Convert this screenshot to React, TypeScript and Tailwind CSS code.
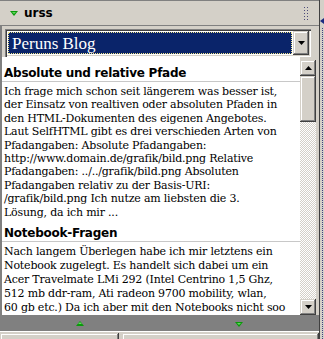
const raised =
  'shadow-[inset_-1px_-1px_#404040,inset_1px_1px_#d4d0c8,inset_-2px_-2px_#808080,inset_2px_2px_#ffffff]';

const firstPost = [
  'Ich frage mich schon seit längerem was besser ist,',
  'der Einsatz von realtiven oder absoluten Pfaden in',
  'den HTML-Dokumenten des eigenen Angebotes.',
  'Laut SelfHTML gibt es drei verschieden Arten von',
  'Pfadangaben: Absolute Pfadangaben:',
  'http://www.domain.de/grafik/bild.png Relative',
  'Pfadangaben: ../../grafik/bild.png Absoluten',
  'Pfadangaben relativ zu der Basis-URI:',
  '/grafik/bild.png Ich nutze am liebsten die 3.',
  'Lösung, da ich mir ...',
];

const secondPost = [
  'Nach langem Überlegen habe ich mir letztens ein',
  'Notebook zugelegt. Es handelt sich dabei um ein',
  'Acer Travelmate LMi 292 (Intel Centrino 1,5 Ghz,',
  '512 mb ddr-ram, Ati radeon 9700 mobility, wlan,',
  '60 gb etc.) Da ich aber mit den Notebooks nicht soo',
];

const Arrow = ({ up, color = '#000000' }: { up?: boolean; color?: string }) => (
  <svg width="7" height="4" viewBox="0 0 7 4">
    <polygon points={up ? '3.5,0 7,4 0,4' : '0,0 7,0 3.5,4'} fill={color} />
  </svg>
);

const GreenArrow = ({ up }: { up?: boolean }) => (
  <svg width="8" height="5" viewBox="0 0 8 5">
    <polygon points={up ? '4,0 8,5 0,5' : '0,0 8,0 4,5'} fill="#0a9a0a" />
    <polygon points={up ? '4,1 6,3 2,3' : '2,1 6,1 4,3'} fill="#5fd85f" />
  </svg>
);

const Post = ({ title, lines, first }: { title: string; lines: string[]; first?: boolean }) => (
  <div className={first ? 'mb-[7px]' : 'mb-[1px]'}>
    <div className="mx-[-2px] px-[2px] border-b border-[#c8c8c8] text-[12px] leading-[15px] font-bold tracking-[-0.25px] text-black font-['DejaVu_Sans',sans-serif] whitespace-nowrap">
      {title}
    </div>
    <div
      className={`pt-[3px] text-[11px] tracking-[-0.2px] text-black font-['DejaVu_Serif',serif] whitespace-nowrap ${
        first ? 'leading-[13.4px]' : 'leading-[14px]'
      }`}
    >
      {lines.map((l) => (
        <div key={l}>{l}</div>
      ))}
    </div>
  </div>
);

export default function App() {
  return (
    <div className="w-[324px] h-[339px] bg-[#d4d0c8] flex overflow-hidden font-['DejaVu_Sans',sans-serif]">
      <div className="w-[319px] flex flex-col">
        {/* panel header */}
        <div className="h-[26px] border-t border-b border-[#808080] flex items-center pl-[10px] pr-[11px]">
          <GreenArrow />
          <span className="ml-[6px] text-[12px] font-bold text-black leading-none">urss</span>
          <svg className="ml-auto" width="4" height="13" viewBox="0 0 4 13">
            {[0, 3, 6, 9, 12].map((y) => (
              <g key={y}>
                <rect x="0" y={y} width="1" height="1" fill="#4a4a7a" />
                <rect x="3" y={y} width="1" height="1" fill="#4a4a7a" />
              </g>
            ))}
          </svg>
        </div>

        {/* body */}
        <div className="flex-1 flex flex-col border-l-2 border-[#808080] min-h-0">
          <div className="pt-[3px] pl-[3px]">
            <div className="w-[306px] h-[28px] flex p-[2px] shadow-[inset_1px_1px_#808080,inset_2px_2px_#404040,inset_-1px_-1px_#ffffff,inset_-2px_-2px_#d4d0c8] bg-white">
              <div className="flex-1 m-[1px] bg-[#0a246a] border border-dotted border-[#f0e68c] flex items-center pl-[3px]">
                <span className="text-[17px] text-white font-['Liberation_Serif',serif] leading-none">Peruns Blog</span>
              </div>
              <div className={`w-[16px] bg-[#d4d0c8] flex items-center justify-center ${raised}`}>
                <Arrow />
              </div>
            </div>
          </div>

          <div className="flex-1 flex min-h-0">
            <div className="w-[298px] bg-white overflow-hidden pt-[9px] pl-[2px]">
              <Post title="Absolute und relative Pfade" lines={firstPost} first />
              <Post title="Notebook-Fragen" lines={secondPost} />
            </div>
            <div className="w-[16px] flex flex-col pt-[3px]">
              <div className={`h-[16px] bg-[#d4d0c8] flex items-center justify-center ${raised}`}>
                <Arrow up />
              </div>
              <div className={`h-[46px] bg-[#d4d0c8] ${raised}`} />
              <div className="flex-1 bg-[repeating-conic-gradient(#d4d0c8_0%_25%,#ffffff_0%_50%)] bg-[length:2px_2px]" />
              <div className={`h-[16px] bg-[#d4d0c8] flex items-center justify-center ${raised}`}>
                <Arrow />
              </div>
            </div>
          </div>
        </div>

        {/* scroll strip */}
        <div className="h-[16px] bg-[#808080] flex items-center">
          <div className="w-[160px] flex justify-center">
            <GreenArrow up />
          </div>
          <div className="w-[160px] flex justify-center pt-[2px]">
            <GreenArrow />
          </div>
        </div>

        {/* bottom buttons */}
        <div className="h-[8px] border-t border-[#ffffff] flex gap-[3px] pt-[1px] overflow-hidden">
          <div className={`w-[119px] h-[20px] bg-[#d4d0c8] ${raised}`} />
          <div className={`flex-1 h-[20px] bg-[#d4d0c8] ${raised}`} />
        </div>
      </div>

      {/* splitter */}
      <div className="flex-1 border-l border-[#404040] flex flex-col items-center">
        <div className="h-[18px]" />
        <svg width="4" height="6" viewBox="0 0 4 6">
          <polygon points="4,0 4,6 0,3" fill="#1a2a80" />
        </svg>
        <div className="mt-[4px] flex-1 border-l border-dotted border-[#404080]" />
      </div>
    </div>
  );
}
